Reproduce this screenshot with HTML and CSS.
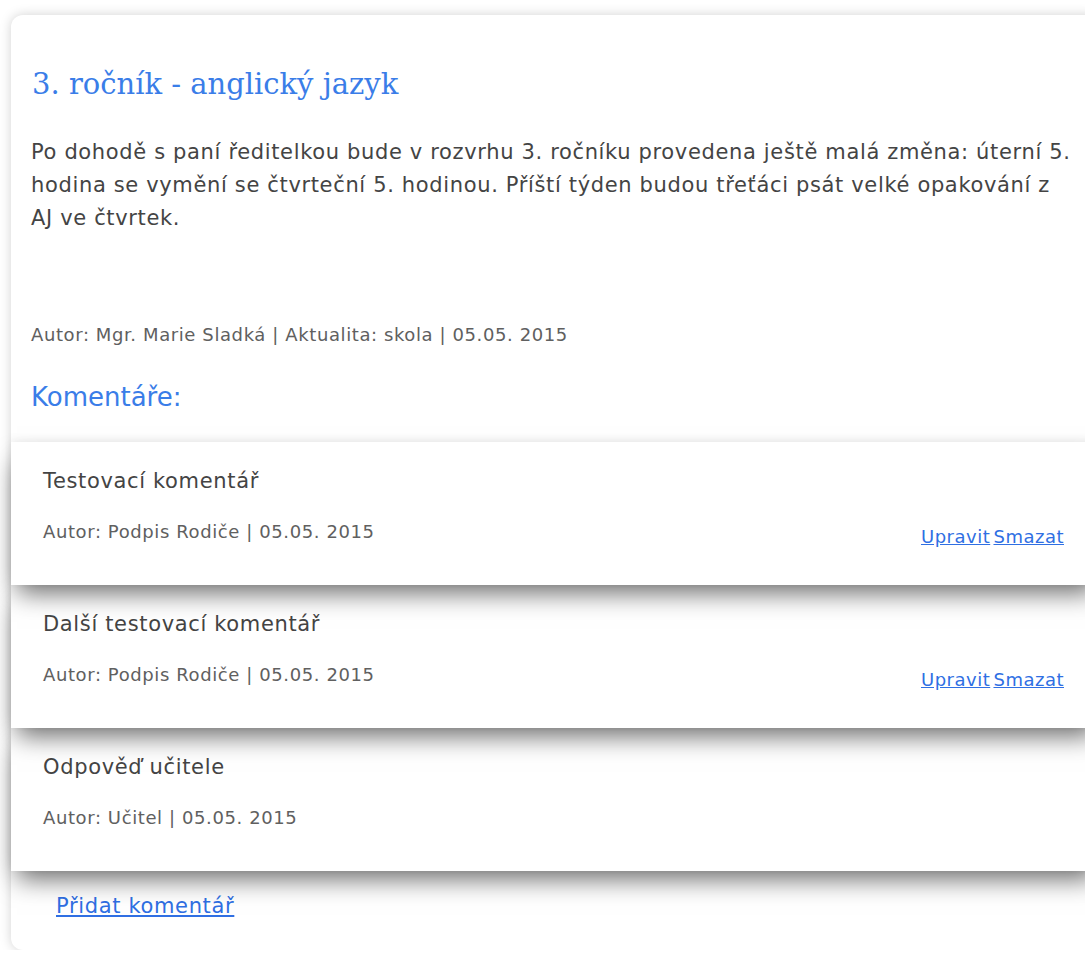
FILE: index.html
```html
<!DOCTYPE html>
<html lang="cs">
<head>
<meta charset="utf-8">
<title>3. ročník - anglický jazyk</title>
<link rel="stylesheet" href="styles.css">
</head>
<body>
<article class="news">
  <h1 class="news-title">3. ročník - anglický jazyk</h1>
  <p class="news-text">Po dohodě s paní ředitelkou bude v rozvrhu 3. ročníku provedena ještě malá změna: úterní 5. hodina se vymění se čtvrteční 5. hodinou. Příští týden budou třeťáci psát velké opakování z AJ ve čtvrtek.</p>
  <p class="news-meta">Autor: Mgr. Marie Sladká | Aktualita: skola | 05.05. 2015</p>

  <h2 class="comments-title">Komentáře:</h2>
  <section class="comments">
    <div class="comment">
      <div class="comment-body">
        <p class="comment-text">Testovací komentář</p>
        <p class="comment-meta">Autor: Podpis Rodiče | 05.05. 2015</p>
      </div>
      <div class="comment-actions"><a href="#">Upravit</a> <a href="#">Smazat</a></div>
    </div>
    <div class="comment">
      <div class="comment-body">
        <p class="comment-text">Další testovací komentář</p>
        <p class="comment-meta">Autor: Podpis Rodiče | 05.05. 2015</p>
      </div>
      <div class="comment-actions"><a href="#">Upravit</a> <a href="#">Smazat</a></div>
    </div>
    <div class="comment">
      <div class="comment-body">
        <p class="comment-text">Odpověď učitele</p>
        <p class="comment-meta">Autor: Učitel | 05.05. 2015</p>
      </div>
    </div>
  </section>
  <a class="add-comment" href="#">Přidat komentář</a>
</article>
</body>
</html>
```
FILE: styles.css
```css
html {
  overflow: hidden;
  background: #ffffff;
}

body {
  margin: 0;
  padding: 15px 0 0 11px;
  font-family: "DejaVu Sans", Verdana, sans-serif;
  color: #444444;
}

/* outer news card, wider than the window on the right */
.news {
  width: 1090px;
  height: 935px;
  box-sizing: border-box;
  background: #ffffff;
  border-radius: 12px;
  box-shadow: 0 0 12px rgba(0, 0, 0, 0.18);
  padding: 49px 0 0 0;
}

.news-title {
  margin: 0 0 0 21px;
  font-family: "DejaVu Serif", Georgia, serif;
  font-weight: normal;
  font-size: 29px;
  line-height: 40px;
  color: #3a7de8;
}

.news-text {
  margin: 32px 0 0 20px;
  width: 1044px;
  font-size: 21px;
  letter-spacing: 0.65px;
  line-height: 33px;
}

.news-meta {
  margin: 88px 0 0 20px;
  font-size: 18px;
  letter-spacing: 0.6px;
  line-height: 24px;
  color: #606060;
}

.comments-title {
  margin: 34px 0 0 20px;
  font-weight: normal;
  font-size: 26px;
  line-height: 32px;
  color: #3a7de8;
}

.comments {
  margin-top: 29px;
}

/* each comment casts a shadow onto the one below it */
.comment {
  position: relative;
  display: flex;
  align-items: flex-end;
  height: 143px;
  box-sizing: border-box;
  padding: 24px 37px 36px 32px;
  background: #ffffff;
  box-shadow: 0 -3px 8px rgba(0, 0, 0, 0.06), 0 14px 24px -6px rgba(0, 0, 0, 0.58);
}

.comment:nth-child(1) { z-index: 3; }
.comment:nth-child(2) { z-index: 2; }
.comment:nth-child(3) { z-index: 1; }

.comment-body {
  flex: 1;
  align-self: flex-start;
}

.comment-text {
  margin: 0;
  font-size: 21px;
  letter-spacing: 0.65px;
  line-height: 30px;
}

.comment-meta {
  margin: 24px 0 0 0;
  font-size: 18px;
  letter-spacing: 0.6px;
  line-height: 24px;
  color: #606060;
}

.comment-actions {
  font-size: 18px;
  letter-spacing: 0.5px;
  word-spacing: -3px;
  line-height: 24px;
}

.comment-actions a,
.add-comment {
  color: #2f6fe3;
  text-decoration: underline;
}

.add-comment {
  display: inline-block;
  margin: 22px 0 0 45px;
  font-size: 21px;
  letter-spacing: 0.65px;
  line-height: 26px;
}
```
